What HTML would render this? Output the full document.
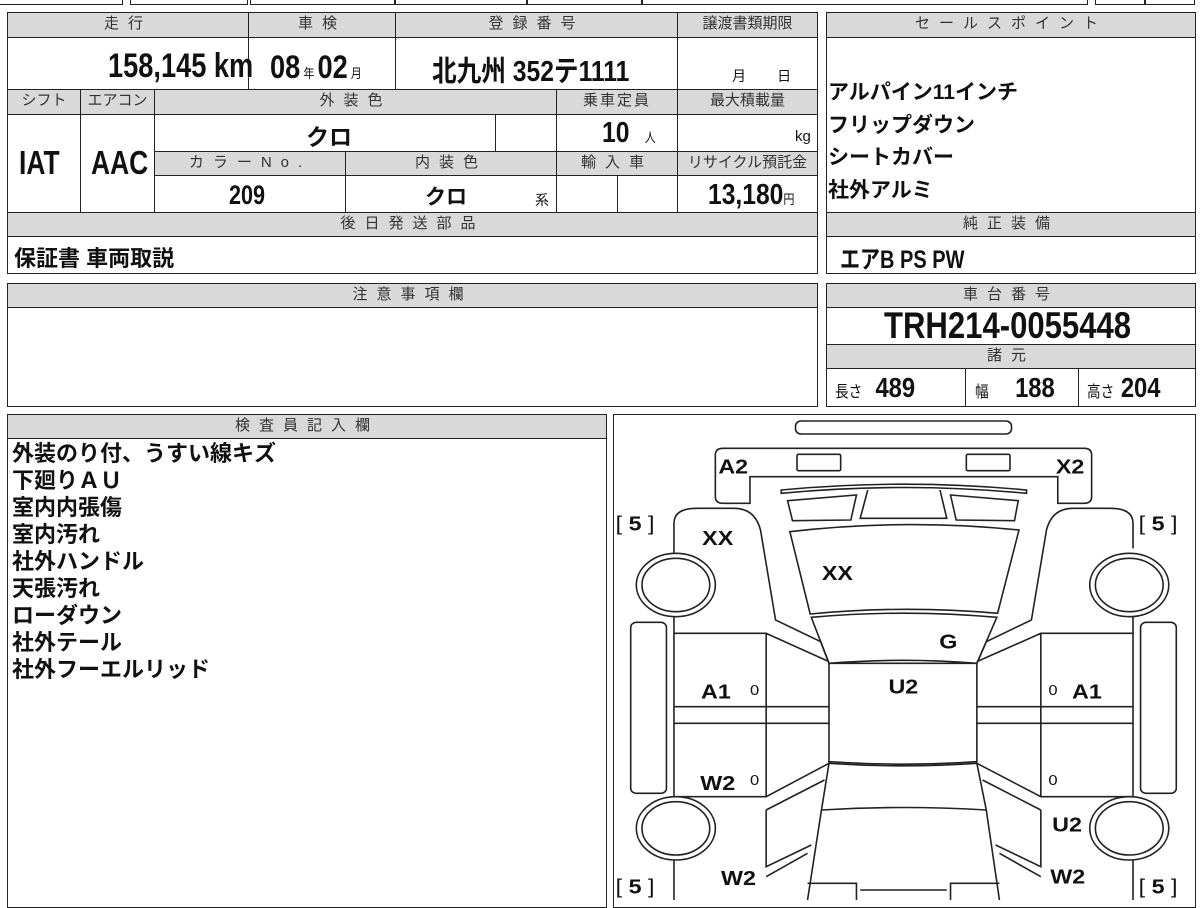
<!DOCTYPE html>
<html><head><meta charset="utf-8"><style>
body{margin:0;width:1200px;height:900px;overflow:hidden;background:#fff;position:relative;font-family:"Liberation Sans","Noto Sans CJK JP",sans-serif;color:#111}
.c{position:absolute;border:1.5px solid #222;box-sizing:border-box;overflow:hidden}
.h{background:#d9d9d9;font-size:15px;letter-spacing:9px;text-align:center;line-height:22px;color:#333}
.v{font-family:"Liberation Sans Narrow","Liberation Sans","Noto Sans CJK JP",sans-serif;font-weight:bold;}
.t{position:absolute;white-space:nowrap}
.j{font-family:"Liberation Sans","Noto Sans CJK JP",sans-serif;font-weight:bold}
.s{font-size:13px;font-weight:normal}
.n{transform:scaleX(.8);transform-origin:left}
</style></head><body>
<div class="c" style="left:-2px;top:-10px;width:125px;height:15px"></div>
<div class="c" style="left:130px;top:-10px;width:118px;height:15px"></div>
<div class="c" style="left:250px;top:-10px;width:145px;height:15px"></div>
<div class="c" style="left:395px;top:-10px;width:132px;height:15px"></div>
<div class="c" style="left:527px;top:-10px;width:115px;height:15px"></div>
<div class="c" style="left:642px;top:-10px;width:446px;height:15px"></div>
<div class="c" style="left:1095px;top:-10px;width:50px;height:15px"></div>
<div class="c" style="left:1145px;top:-10px;width:50px;height:15px"></div>

<div class="c h" style="left:7px;top:12px;width:242px;height:26px">走行</div>
<div class="c h" style="left:248px;top:12px;width:148px;height:26px">車検</div>
<div class="c h" style="left:395px;top:12px;width:283px;height:26px">登録番号</div>
<div class="c h" style="left:677px;top:12px;width:141px;height:26px;letter-spacing:0">譲渡書類期限</div>
<div class="c" style="left:7px;top:37px;width:242px;height:53px"></div>
<div class="c" style="left:248px;top:37px;width:148px;height:53px"></div>
<div class="c" style="left:395px;top:37px;width:283px;height:53px"></div>
<div class="c" style="left:677px;top:37px;width:141px;height:53px"></div>
<div class="t v n" style="left:108px;top:47px;font-size:34px">158,145 km</div>
<div class="t v" style="left:270px;top:49px;font-size:32px;transform:scaleX(.85);transform-origin:left">08<span class="s"> 年 </span>02<span class="s"> 月</span></div>
<div class="t j" style="left:432px;top:48px;font-size:29px;transform:scaleX(.85);transform-origin:left">北九州 352テ1111</div>
<div class="t" style="left:732px;top:66px;font-size:14px">月&nbsp;&nbsp;&nbsp;&nbsp;&nbsp;&nbsp;&nbsp;&nbsp;日</div>

<div class="c h" style="left:7px;top:89px;width:74px;height:26px;letter-spacing:0">シフト</div>
<div class="c h" style="left:80px;top:89px;width:75px;height:26px;letter-spacing:0">エアコン</div>
<div class="c h" style="left:154px;top:89px;width:403px;height:26px">外装色</div>
<div class="c h" style="left:556px;top:89px;width:122px;height:26px;letter-spacing:2px">乗車定員</div>
<div class="c h" style="left:677px;top:89px;width:141px;height:26px;letter-spacing:0">最大積載量</div>
<div class="c" style="left:7px;top:114px;width:74px;height:99px"></div>
<div class="c" style="left:80px;top:114px;width:75px;height:99px"></div>
<div class="t v n" style="left:19px;top:144px;font-size:33px">IAT</div>
<div class="t v n" style="left:91px;top:144px;font-size:33px">AAC</div>
<div class="c" style="left:154px;top:114px;width:342px;height:38px"></div>
<div class="c" style="left:495px;top:114px;width:62px;height:38px"></div>
<div class="c" style="left:556px;top:114px;width:122px;height:38px"></div>
<div class="c" style="left:677px;top:114px;width:141px;height:38px"></div>
<div class="t j" style="left:306px;top:118px;font-size:23px">クロ</div>
<div class="t v" style="left:602px;top:117px;font-size:29px;transform:scaleX(.85);transform-origin:left">10<span class="s" style="margin-left:18px">人</span></div>
<div class="t" style="left:795px;top:128px;font-size:15px">kg</div>
<div class="c h" style="left:154px;top:151px;width:192px;height:25px">カラーNo.</div>
<div class="c h" style="left:345px;top:151px;width:212px;height:25px">内装色</div>
<div class="c h" style="left:556px;top:151px;width:122px;height:25px">輸入車</div>
<div class="c h" style="left:677px;top:151px;width:141px;height:25px;letter-spacing:0">リサイクル預託金</div>
<div class="c" style="left:154px;top:175px;width:192px;height:38px"></div>
<div class="c" style="left:345px;top:175px;width:212px;height:38px"></div>
<div class="c" style="left:556px;top:175px;width:62px;height:38px"></div>
<div class="c" style="left:617px;top:175px;width:61px;height:38px"></div>
<div class="c" style="left:677px;top:175px;width:141px;height:38px"></div>
<div class="t v n" style="left:229px;top:180px;font-size:27px">209</div>
<div class="t j" style="left:425px;top:181px;font-size:21px">クロ</div>
<div class="t" style="left:535px;top:190px;font-size:14px">系</div>
<div class="t v" style="left:708px;top:179px;font-size:29px;transform:scaleX(.85);transform-origin:left">13,180<span class="s">円</span></div>
<div class="c h" style="left:7px;top:212px;width:811px;height:25px">後日発送部品</div>
<div class="c" style="left:7px;top:236px;width:811px;height:38px"></div>
<div class="t j" style="left:14px;top:241px;font-size:22px">保証書 車両取説</div>

<div class="c h" style="left:826px;top:12px;width:370px;height:26px">セールスポイント</div>
<div class="c" style="left:826px;top:37px;width:370px;height:176px"></div>
<div class="t j" style="left:828px;top:77px;font-size:21px;line-height:32.5px">アルパイン11インチ<br>フリップダウン<br>シートカバー<br>社外アルミ</div>
<div class="c h" style="left:826px;top:212px;width:370px;height:25px">純正装備</div>
<div class="c" style="left:826px;top:236px;width:370px;height:38px"></div>
<div class="t v" style="left:840px;top:240px;font-size:25px;transform:scaleX(.8);transform-origin:left">エアB PS PW</div>

<div class="c h" style="left:7px;top:283px;width:811px;height:25px">注意事項欄</div>
<div class="c" style="left:7px;top:307px;width:811px;height:100px"></div>
<div class="c h" style="left:826px;top:283px;width:370px;height:25px">車台番号</div>
<div class="c" style="left:826px;top:307px;width:370px;height:38px"></div>
<div class="t v" style="left:884px;top:305px;font-size:37px;transform:scaleX(.84);transform-origin:left">TRH214-0055448</div>
<div class="c h" style="left:826px;top:344px;width:370px;height:25px">諸元</div>
<div class="c" style="left:826px;top:368px;width:140px;height:39px"></div>
<div class="c" style="left:965px;top:368px;width:114px;height:39px"></div>
<div class="c" style="left:1078px;top:368px;width:118px;height:39px"></div>
<div class="t v" style="left:835px;top:372px;font-size:28px;transform:scaleX(.85);transform-origin:left"><span class="s" style="font-size:16px">長さ</span>&nbsp;&nbsp;489</div>
<div class="t v" style="left:975px;top:372px;font-size:28px;transform:scaleX(.85);transform-origin:left"><span class="s" style="font-size:16px">幅</span>&nbsp;&nbsp;&nbsp;&nbsp;188</div>
<div class="t v" style="left:1087px;top:372px;font-size:28px;transform:scaleX(.85);transform-origin:left"><span class="s" style="font-size:16px">高さ</span> 204</div>

<div class="c h" style="left:7px;top:414px;width:600px;height:25px">検査員記入欄</div>
<div class="c" style="left:7px;top:438px;width:600px;height:470px"></div>
<div class="t j" style="left:12px;top:440px;font-size:22px;line-height:27px">外装のり付、うすい線キズ<br>下廻りＡＵ<br>室内内張傷<br>室内汚れ<br>社外ハンドル<br>天張汚れ<br>ローダウン<br>社外テール<br>社外フーエルリッド</div>

<div class="c" style="left:613px;top:414px;width:583px;height:494px"></div>
<svg style="position:absolute;left:610px;top:410px" width="590" height="490" viewBox="0 0 1568 1470" preserveAspectRatio="none" fill="none" stroke="#222" stroke-width="1.6">
<g vector-effect="non-scaling-stroke">
<rect vector-effect="non-scaling-stroke" x="493" y="33" width="574" height="39" rx="15"/>
<path vector-effect="non-scaling-stroke" d="M300 115 H1260 Q1280 115 1280 135 V260 Q1280 280 1260 280 H1190 V200 H372 V280 H300 Q280 280 280 260 V135 Q280 115 300 115Z"/>
<rect vector-effect="non-scaling-stroke" x="497" y="133" width="116" height="49" rx="4"/>
<rect vector-effect="non-scaling-stroke" x="947" y="133" width="116" height="49" rx="4"/>
<path vector-effect="non-scaling-stroke" d="M455 240 Q780 205 1107 240 L1107 250 Q780 215 455 250Z"/>
<path vector-effect="non-scaling-stroke" d="M472 272 L655 255 L640 330 L485 332Z"/>
<path vector-effect="non-scaling-stroke" d="M685 240 L665 325 L895 325 L877 240"/>
<path vector-effect="non-scaling-stroke" d="M905 255 L1085 272 L1075 332 L920 330Z"/>
<path vector-effect="non-scaling-stroke" d="M478 365 Q780 325 1087 360 L1030 610 Q780 585 532 612Z"/>
<path vector-effect="non-scaling-stroke" d="M535 622 Q780 597 1028 622 L975 760 Q780 742 582 760Z"/>
<path vector-effect="non-scaling-stroke" d="M582 760 H975 V1055 Q780 1070 582 1055Z"/>
<path vector-effect="non-scaling-stroke" d="M582 1060 Q780 1075 975 1060 L1000 1200 Q780 1185 562 1200Z"/>
<path vector-effect="non-scaling-stroke" d="M562 1200 L525 1470 M1000 1200 L1035 1470"/>
<path vector-effect="non-scaling-stroke" d="M525 1420 H655 V1470 M1035 1420 H905 V1470 M665 1440 H895"/>
<path vector-effect="non-scaling-stroke" d="M170 415 V340 Q170 295 230 295 H330 Q385 295 400 360 L440 630 L560 695 L582 760"/>
<path vector-effect="non-scaling-stroke" d="M1390 415 V340 Q1390 295 1330 295 H1230 Q1175 295 1160 360 L1120 630 L1000 695 L975 760"/>
<ellipse vector-effect="non-scaling-stroke" cx="175" cy="525" rx="105" ry="95"/><ellipse vector-effect="non-scaling-stroke" cx="175" cy="525" rx="90" ry="80"/>
<ellipse vector-effect="non-scaling-stroke" cx="1380" cy="525" rx="105" ry="95"/><ellipse vector-effect="non-scaling-stroke" cx="1380" cy="525" rx="90" ry="80"/>
<ellipse vector-effect="non-scaling-stroke" cx="175" cy="1255" rx="105" ry="95"/><ellipse vector-effect="non-scaling-stroke" cx="175" cy="1255" rx="90" ry="80"/>
<ellipse vector-effect="non-scaling-stroke" cx="1380" cy="1255" rx="105" ry="95"/><ellipse vector-effect="non-scaling-stroke" cx="1380" cy="1255" rx="90" ry="80"/>
<path vector-effect="non-scaling-stroke" d="M170 430 V415 M170 620 V1160 M170 1350 V1470 M1390 620 V1160 M1390 1350 V1470"/>
<rect vector-effect="non-scaling-stroke" x="55" y="637" width="95" height="513" rx="15"/>
<rect vector-effect="non-scaling-stroke" x="1410" y="637" width="95" height="513" rx="15"/>
<path vector-effect="non-scaling-stroke" d="M170 670 H415 L582 755 M170 1160 H415 L582 1060 M415 670 V1160 M170 890 H582 M170 940 H582"/>
<path vector-effect="non-scaling-stroke" d="M1390 670 H1145 L975 755 M1390 1160 H1145 L975 1060 M1145 670 V1160 M1390 890 H975 M1390 940 H975"/>
<path vector-effect="non-scaling-stroke" d="M415 1200 L570 1110 M415 1200 V1370 L535 1305 M415 1400 L525 1330"/>
<path vector-effect="non-scaling-stroke" d="M1145 1200 L990 1110 M1145 1200 V1370 L1025 1305 M1145 1400 L1035 1330"/>
</g>
<g fill="#111" stroke="none" font-family="Liberation Sans Narrow,Liberation Sans,sans-serif" font-weight="bold" font-size="62">
<text x="288" y="190">A2</text><text x="1185" y="190">X2</text>
<text x="245" y="405">XX</text><text x="563" y="510">XX</text>
<text x="875" y="715">G</text><text x="740" y="850">U2</text>
<text x="242" y="865">A1</text><text x="1228" y="865">A1</text>
<text x="240" y="1140">W2</text><text x="1175" y="1265">U2</text>
<text x="295" y="1425">W2</text><text x="1170" y="1420">W2</text>
<text x="372" y="855" font-size="44" font-weight="normal">0</text>
<text x="1165" y="855" font-size="44" font-weight="normal">0</text>
<text x="372" y="1125" font-size="44" font-weight="normal">0</text>
<text x="1165" y="1125" font-size="44" font-weight="normal">0</text>
<text x="15" y="362" font-weight="normal">[ <tspan font-weight="bold">5</tspan> ]</text>
<text x="1405" y="362" font-weight="normal">[ <tspan font-weight="bold">5</tspan> ]</text>
<text x="15" y="1450" font-weight="normal">[ <tspan font-weight="bold">5</tspan> ]</text>
<text x="1405" y="1450" font-weight="normal">[ <tspan font-weight="bold">5</tspan> ]</text>
</g>
</svg>
</body></html>
